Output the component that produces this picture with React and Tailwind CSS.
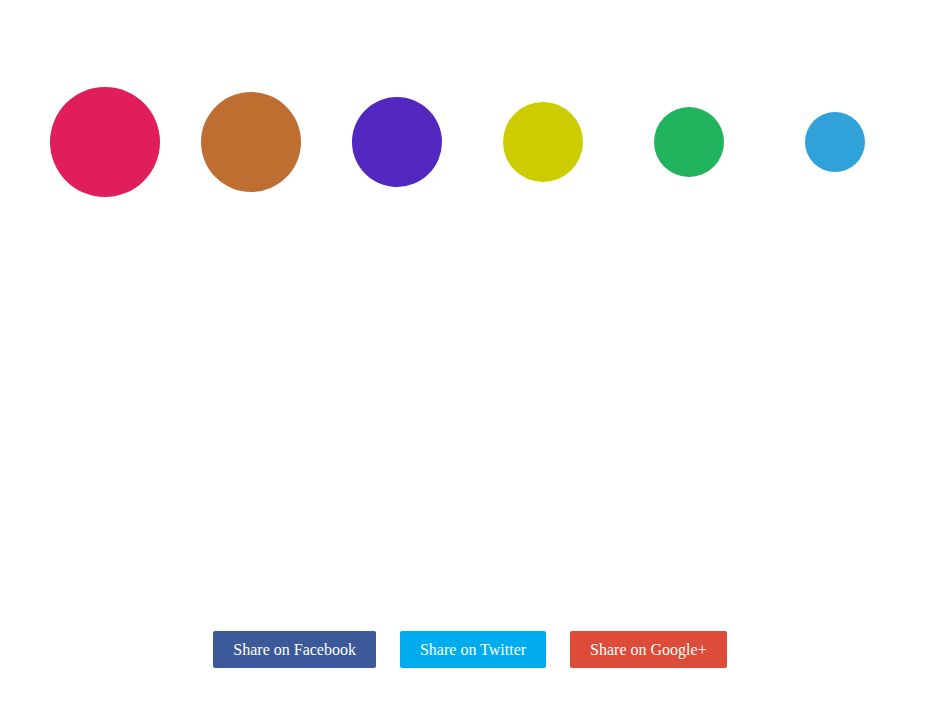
import React from 'react'

// Loader-style dots, shrinking left to right
const dots = [
  { size: 'w-[110px] h-[110px]', color: 'bg-[#e01e5a]' },
  { size: 'w-[100px] h-[100px]', color: 'bg-[#bf6e32]' },
  { size: 'w-[90px] h-[90px]', color: 'bg-[#5227bf]' },
  { size: 'w-[80px] h-[80px]', color: 'bg-[#cccc00]' },
  { size: 'w-[70px] h-[70px]', color: 'bg-[#22b35e]' },
  { size: 'w-[60px] h-[60px]', color: 'bg-[#31a1da]' },
]

const shares = [
  { label: 'Share on Facebook', color: 'bg-[#3b5998]' },
  { label: 'Share on Twitter', color: 'bg-[#00aced]' },
  { label: 'Share on Google+', color: 'bg-[#dd4b39]' },
]

export default function App() {
  return (
    <div className="w-full min-h-[704px] bg-white flex flex-col items-center">
      {/* dots row */}
      <div className="mt-[87px] h-[110px] flex items-center justify-center">
        {dots.map((d, i) => (
          <div key={i} className="w-[146px] flex justify-center">
            <div className={`${d.size} ${d.color} rounded-full`} />
          </div>
        ))}
      </div>

      {/* share buttons */}
      <div className="mt-[434px] flex justify-center gap-6">
        {shares.map((s) => (
          <button
            key={s.label}
            className={`${s.color} h-[37px] px-5 rounded-[2px] text-white text-base font-['Liberation_Serif',serif]`}
          >
            {s.label}
          </button>
        ))}
      </div>
    </div>
  )
}
